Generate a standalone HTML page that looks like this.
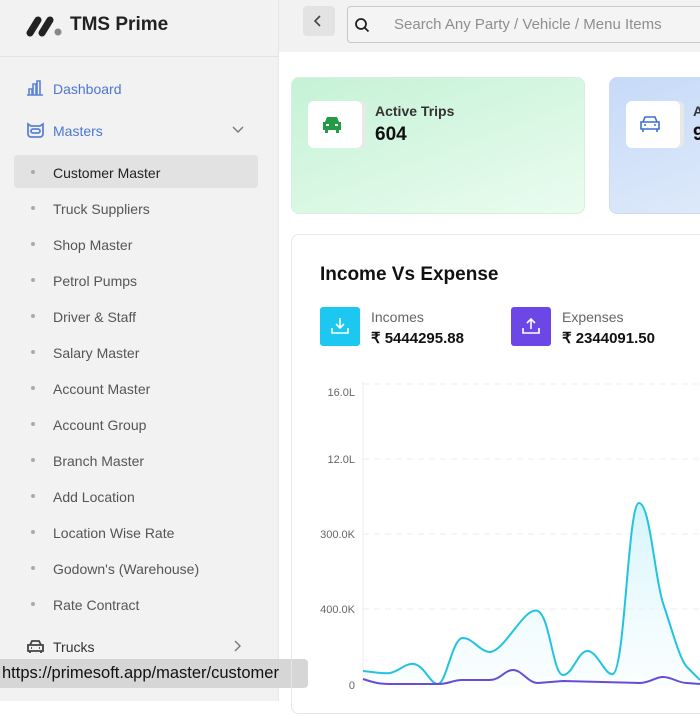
<!DOCTYPE html>
<html><head><meta charset="utf-8"><style>
*{box-sizing:border-box;margin:0;padding:0}
body{width:700px;height:701px;overflow:hidden;background:#fff;font-family:"Liberation Sans",sans-serif;position:relative}
.abs{position:absolute}
.side{left:0;top:0;width:279px;height:701px;background:#f2f2f2;border-right:1px solid #e6e6e6}
.top{left:279px;top:0;width:421px;height:52px;background:#f2f2f2}
.item{position:absolute;left:53px;font-size:14px;color:#555}
.dot{position:absolute;left:31px;width:4px;height:4px;border-radius:2px;background:#aaa}
</style></head><body>
<div class="abs side"></div>
<div class="abs top"></div>
<div class="abs" style="left:0;top:56px;width:279px;height:1px;background:#e2e2e2"></div>
<svg class="abs" style="left:26px;top:15px" width="40" height="22" viewBox="0 0 40 22">
<line x1="4" y1="18" x2="12" y2="5" stroke="#222" stroke-width="7" stroke-linecap="round"/>
<line x1="16" y1="18" x2="24" y2="5" stroke="#222" stroke-width="7" stroke-linecap="round"/>
<circle cx="32" cy="17" r="3.5" fill="#888"/></svg>
<div class="abs" style="left:70px;top:14px;font-size:19px;font-weight:bold;color:#222">TMS Prime</div>
<svg class="abs" style="left:26px;top:80px" width="18" height="16" viewBox="0 0 18 16" fill="none" stroke="#5b82d6" stroke-width="1.6"><path d="M1 15h16M3 15V9h3v6M7 15V4h3v11M11 15V1h3v14"/></svg>
<div class="abs" style="left:53px;top:81px;font-size:14px;color:#4a76d4">Dashboard</div>
<svg class="abs" style="left:26px;top:122px" width="19" height="16" viewBox="0 0 19 16" fill="none" stroke="#5b82d6" stroke-width="1.8"><path d="M2 2l3 2h9l3-2v10a3 3 0 0 1-3 3H5a3 3 0 0 1-3-3z"/><rect x="5" y="7" width="9" height="4" rx="2"/></svg>
<div class="abs" style="left:53px;top:123px;font-size:14px;color:#4a76d4">Masters</div>
<svg class="abs" style="left:232px;top:126px" width="12" height="8" viewBox="0 0 12 8" fill="none" stroke="#777" stroke-width="1.4"><path d="M1 1l5 5 5-5"/></svg>
<div class="abs" style="left:14px;top:155px;width:244px;height:33px;background:#e2e2e2;border-radius:4px"></div>
<div class="dot" style="top:170px"></div><div class="item" style="top:165px;color:#222">Customer Master</div>
<div class="dot" style="top:206px"></div><div class="item" style="top:201px">Truck Suppliers</div>
<div class="dot" style="top:242px"></div><div class="item" style="top:237px">Shop Master</div>
<div class="dot" style="top:278px"></div><div class="item" style="top:273px">Petrol Pumps</div>
<div class="dot" style="top:314px"></div><div class="item" style="top:309px">Driver &amp; Staff</div>
<div class="dot" style="top:350px"></div><div class="item" style="top:345px">Salary Master</div>
<div class="dot" style="top:386px"></div><div class="item" style="top:381px">Account Master</div>
<div class="dot" style="top:422px"></div><div class="item" style="top:417px">Account Group</div>
<div class="dot" style="top:458px"></div><div class="item" style="top:453px">Branch Master</div>
<div class="dot" style="top:494px"></div><div class="item" style="top:489px">Add Location</div>
<div class="dot" style="top:530px"></div><div class="item" style="top:525px">Location Wise Rate</div>
<div class="dot" style="top:566px"></div><div class="item" style="top:561px">Godown's (Warehouse)</div>
<div class="dot" style="top:602px"></div><div class="item" style="top:597px">Rate Contract</div>
<svg class="abs" style="left:26px;top:639px" width="19" height="15" viewBox="0 0 19 15" fill="none" stroke="#444" stroke-width="1.8"><path d="M4 6l2-4h7l2 4M2 6h15v6H2zM4 12v2M15 12v2M5 9h1M13 9h1"/></svg>
<div class="abs" style="left:53px;top:639px;font-size:14px;color:#333">Trucks</div>
<svg class="abs" style="left:234px;top:640px" width="8" height="12" viewBox="0 0 8 12" fill="none" stroke="#777" stroke-width="1.4"><path d="M1 1l5 5-5 5"/></svg>
<div class="abs" style="left:0;top:659px;width:308px;height:29px;background:#d6d6d6;border-radius:0 4px 4px 0"></div>
<div class="abs" style="left:2px;top:664px;font-size:16.5px;color:#111">https://primesoft.app/master/customer</div>
<div class="abs" style="left:303px;top:6px;width:32px;height:30px;background:#e3e3e3;border-radius:4px"></div>
<svg class="abs" style="left:314px;top:15px" width="8" height="12" viewBox="0 0 8 12" fill="none" stroke="#444" stroke-width="1.6"><path d="M6 1L1 6l5 5"/></svg>
<div class="abs" style="left:347px;top:6px;width:360px;height:37px;border:1px solid #c8c8c8;border-radius:4px;background:#f4f4f4"></div>
<svg class="abs" style="left:354px;top:17px" width="16" height="16" viewBox="0 0 16 16" fill="none" stroke="#222" stroke-width="1.8"><circle cx="7" cy="7" r="5"/><path d="M11 11l3.5 3.5"/></svg>
<div class="abs" style="left:394px;top:16px;font-size:15px;color:#8e8e8e;white-space:nowrap">Search Any Party / Vehicle / Menu Items</div>
<div class="abs" style="left:291px;top:77px;width:294px;height:137px;border-radius:8px;background:linear-gradient(160deg,#c5f2d6,#eafcef);border:1px solid #d8eedf"></div>
<div class="abs" style="left:308px;top:101px;width:54px;height:47px;background:#fff;border-radius:6px;box-shadow:4px 0 0 #e8e8e8"></div>
<svg class="abs" style="left:321px;top:115px" width="22" height="19" viewBox="0 0 22 19"><path d="M4 7l2-5h10l2 5h2v8h-2v3h-3v-3H7v3H4v-3H2V7z" fill="#239a45"/><rect x="5" y="9" width="3" height="2" fill="#fff"/><rect x="14" y="9" width="3" height="2" fill="#fff"/></svg>
<div class="abs" style="left:375px;top:103px;font-size:14px;font-weight:bold;color:#333">Active Trips</div>
<div class="abs" style="left:375px;top:124px;font-size:19px;font-weight:bold;color:#111">604</div>
<div class="abs" style="left:609px;top:77px;width:120px;height:137px;border-radius:8px;background:linear-gradient(160deg,#c6daf7,#dfeafb);border:1px solid #cfdcef"></div>
<div class="abs" style="left:626px;top:101px;width:54px;height:47px;background:#fff;border-radius:6px;box-shadow:4px 0 0 #e8e8e8"></div>
<svg class="abs" style="left:639px;top:115px" width="22" height="19" viewBox="0 0 22 19" fill="none" stroke="#3b6fd4" stroke-width="1.6"><path d="M4 7l2-5h10l2 5M2 7h18v7H2zM4 14v3M18 14v3M5 10h2M15 10h2"/></svg>
<div class="abs" style="left:693px;top:103px;font-size:14px;font-weight:bold;color:#333">A</div>
<div class="abs" style="left:693px;top:124px;font-size:19px;font-weight:bold;color:#111">9</div>
<div class="abs" style="left:291px;top:234px;width:430px;height:480px;border:1px solid #e6e6e6;border-radius:8px"></div>
<div class="abs" style="left:320px;top:264px;font-size:19px;font-weight:bold;color:#111">Income Vs Expense</div>
<div class="abs" style="left:320px;top:307px;width:40px;height:39px;background:#1cc8f0;border-radius:3px"></div>
<svg class="abs" style="left:330px;top:316px" width="20" height="20" viewBox="0 0 20 20" fill="none" stroke="#fff" stroke-width="1.6"><path d="M10 2v10M6 8l4 4 4-4M2 12v5h16v-5"/></svg>
<div class="abs" style="left:371px;top:309px;font-size:14px;color:#666">Incomes</div>
<div class="abs" style="left:371px;top:329px;font-size:15px;font-weight:bold;color:#111">₹ 5444295.88</div>
<div class="abs" style="left:511px;top:307px;width:40px;height:39px;background:#6c47e6;border-radius:3px"></div>
<svg class="abs" style="left:521px;top:316px" width="20" height="20" viewBox="0 0 20 20" fill="none" stroke="#fff" stroke-width="1.6"><path d="M10 13V3M6 7l4-4 4 4M2 12v5h16v-5"/></svg>
<div class="abs" style="left:562px;top:309px;font-size:14px;color:#666">Expenses</div>
<div class="abs" style="left:562px;top:329px;font-size:15px;font-weight:bold;color:#111">₹ 2344091.50</div>
<svg class="abs" style="left:0;top:0" width="700" height="701">
<defs><linearGradient id="g" x1="0" y1="0" x2="0" y2="1"><stop offset="0" stop-color="#c9f1fb" stop-opacity=".8"/><stop offset="1" stop-color="#eefbfe" stop-opacity=".3"/></linearGradient></defs>
<g stroke="#ececec" stroke-dasharray="6 5"><line x1="363" y1="384" x2="700" y2="384"/><line x1="363" y1="459" x2="700" y2="459"/><line x1="363" y1="534" x2="700" y2="534"/><line x1="363" y1="609" x2="700" y2="609"/></g>
<line x1="363" y1="382" x2="363" y2="686" stroke="#ececec"/>
<g font-family="Liberation Sans" font-size="11" fill="#666" text-anchor="end"><text x="355" y="396">16.0L</text><text x="355" y="463">12.0L</text><text x="355" y="538">300.0K</text><text x="355" y="613">400.0K</text><text x="355" y="689">0</text></g>
<path d="M363 671C375 672 382 674 390 673C400 671 405 663 414 664C425 666 430 684 438 684C446 684 452 640 462 638C472 637 480 652 490 652C505 651 525 605 538 611C550 617 553 675 563 675C573 675 578 650 588 651C598 652 605 676 613 674C625 670 628 503 639 503C650 503 655 580 663 603C672 630 680 660 687 667L700 680L700 686L363 686Z" fill="url(#g)"/>
<path d="M363 671C375 672 382 674 390 673C400 671 405 663 414 664C425 666 430 684 438 684C446 684 452 640 462 638C472 637 480 652 490 652C505 651 525 605 538 611C550 617 553 675 563 675C573 675 578 650 588 651C598 652 605 676 613 674C625 670 628 503 639 503C650 503 655 580 663 603C672 630 680 660 687 667L700 680" fill="none" stroke="#22c3e0" stroke-width="2"/>
<path d="M363 679C375 683 380 684 390 684L438 684C450 684 452 680 462 680L490 680C500 680 505 670 513 670C522 670 528 683 538 683L563 681L639 683C650 683 655 677 663 677C672 677 678 683 687 683L700 684" fill="none" stroke="#6a4bd8" stroke-width="2"/>
</svg>
</body></html>
